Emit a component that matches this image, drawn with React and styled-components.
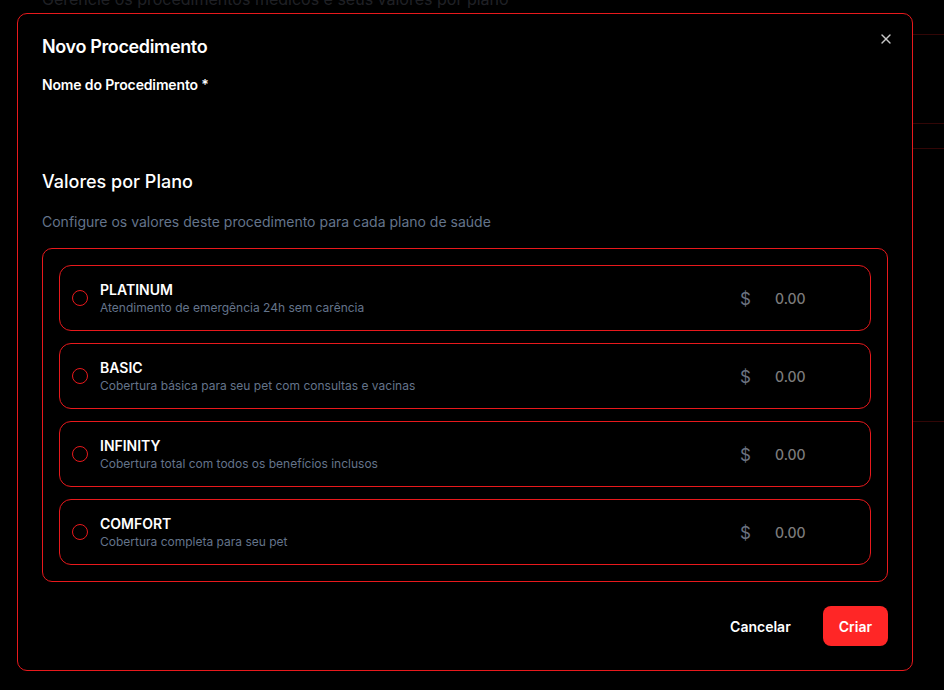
import React from "react";
import styled, { createGlobalStyle } from "styled-components";

const Global = createGlobalStyle`
  html, body { margin: 0; padding: 0; background: #000; }
  body { font-family: Inter, "Noto Sans", "Liberation Sans", sans-serif; color: #fff; overflow: hidden; }
  * { box-sizing: border-box; }
`;

const Page = styled.div`
  width: 944px;
  height: 690px;
  padding: 0 0 0 42px;
  overflow: hidden;
`;

const PageSubtitle = styled.p`
  margin: -13px 0 0;
  font-size: 16px;
  line-height: 24px;
  color: #8d94a8;
`;

const Table = styled.div`
  margin: 23px 0 0 -18px;
  display: flex;
  flex-direction: column;
`;

const TableRow = styled.div`
  height: ${(p) => p.$h}px;
  border-bottom: 1px solid #e51d1d;
`;

const Overlay = styled.div`
  position: fixed;
  inset: 0;
  background: rgba(0, 0, 0, 0.78);
`;

const Dialog = styled.div`
  position: fixed;
  left: 17px;
  top: 13px;
  width: 896px;
  background: #000;
  border: 1px solid #e8191c;
  border-radius: 10px;
  padding: 24px;
  display: flex;
  flex-direction: column;
`;

const CloseButton = styled.button`
  position: absolute;
  right: 18px;
  top: 17px;
  width: 16px;
  height: 16px;
  padding: 0;
  border: 0;
  background: none;
  color: #c8c8c8;
  display: flex;
  align-items: center;
  justify-content: center;
  cursor: pointer;
`;

const Title = styled.h2`
  margin: 0;
  font-size: 18px;
  line-height: 18px;
  font-weight: 600;
  letter-spacing: -0.02em;
`;

const Field = styled.div`
  margin-top: 19px;
  display: flex;
  flex-direction: column;
  gap: 8px;
`;

const Label = styled.label`
  font-size: 14px;
  line-height: 20px;
  font-weight: 600;
  letter-spacing: -0.01em;
`;

const NameInput = styled.input`
  height: 40px;
  background: #000;
  border: 1px solid #000;
  color: #fff;
  outline: none;
`;

const SectionTitle = styled.h3`
  margin: 25px 0 0;
  font-size: 18px;
  line-height: 28px;
  font-weight: 500;
`;

const SectionText = styled.p`
  margin: 16px 0 0;
  font-size: 14px;
  line-height: 20px;
  color: #64748b;
`;

const PlansBox = styled.div`
  margin-top: 16px;
  border: 1px solid #e8191c;
  border-radius: 10px;
  padding: 16px;
  display: flex;
  flex-direction: column;
  gap: 12px;
`;

const PlanCard = styled.div`
  height: 66px;
  border: 1px solid #e8191c;
  border-radius: 12px;
  padding: 0 12px;
  display: flex;
  align-items: center;
  gap: 12px;
`;

const Radio = styled.span`
  width: 16px;
  height: 16px;
  border-radius: 50%;
  border: 1.5px solid #e8191c;
  flex-shrink: 0;
`;

const PlanText = styled.div`
  flex: 1;
  display: flex;
  flex-direction: column;
`;

const PlanName = styled.span`
  font-size: 14px;
  line-height: 20px;
  font-weight: 600;
`;

const PlanDesc = styled.span`
  font-size: 12px;
  line-height: 16px;
  color: #64748b;
`;

const PriceWrap = styled.div`
  position: relative;
  width: 128px;
  height: 40px;
  display: flex;
  align-items: center;
`;

const Dollar = styled.span`
  position: absolute;
  left: 10px;
  top: 11px;
  font-size: 17px;
  line-height: 20px;
  color: #6b7280;
`;

const PriceInput = styled.input`
  width: 100%;
  height: 100%;
  background: transparent;
  border: 0;
  outline: none;
  padding-left: 45px;
  font-family: inherit;
  font-size: 14px;
  font-weight: 500;
  color: #fff;
  &::placeholder { color: #7c7c7c; }
`;

const Footer = styled.div`
  margin-top: 24px;
  display: flex;
  justify-content: flex-end;
  gap: 16px;
`;

const Button = styled.button`
  height: 40px;
  padding: 0 16px;
  border: 0;
  border-radius: 8px;
  font-family: inherit;
  font-size: 14px;
  font-weight: 600;
  color: #fff;
  background: ${(p) => (p.$primary ? "#ff2626" : "transparent")};
  cursor: pointer;
`;

const plans = [
  { name: "PLATINUM", desc: "Atendimento de emergência 24h sem carência" },
  { name: "BASIC", desc: "Cobertura básica para seu pet com consultas e vacinas" },
  { name: "INFINITY", desc: "Cobertura total com todos os benefícios inclusos" },
  { name: "COMFORT", desc: "Cobertura completa para seu pet" },
];

export default function App() {
  return (
    <>
      <Global />
      <Page>
        <PageSubtitle>Gerencie os procedimentos médicos e seus valores por plano</PageSubtitle>
        <Table>
          <TableRow $h={1} />
          <TableRow $h={89} />
          <TableRow $h={25} />
          <TableRow $h={273} />
        </Table>
      </Page>
      <Overlay />
      <Dialog role="dialog">
        <CloseButton aria-label="Fechar">
          <svg width="16" height="16" viewBox="0 0 24 24" fill="none" stroke="currentColor" strokeWidth="2" strokeLinecap="round">
            <path d="M18 6 6 18" />
            <path d="m6 6 12 12" />
          </svg>
        </CloseButton>
        <Title>Novo Procedimento</Title>
        <Field>
          <Label>Nome do Procedimento *</Label>
          <NameInput />
        </Field>
        <SectionTitle>Valores por Plano</SectionTitle>
        <SectionText>Configure os valores deste procedimento para cada plano de saúde</SectionText>
        <PlansBox>
          {plans.map((p) => (
            <PlanCard key={p.name}>
              <Radio />
              <PlanText>
                <PlanName>{p.name}</PlanName>
                <PlanDesc>{p.desc}</PlanDesc>
              </PlanText>
              <PriceWrap>
                <Dollar>$</Dollar>
                <PriceInput placeholder="0.00" />
              </PriceWrap>
            </PlanCard>
          ))}
        </PlansBox>
        <Footer>
          <Button>Cancelar</Button>
          <Button $primary>Criar</Button>
        </Footer>
      </Dialog>
    </>
  );
}
